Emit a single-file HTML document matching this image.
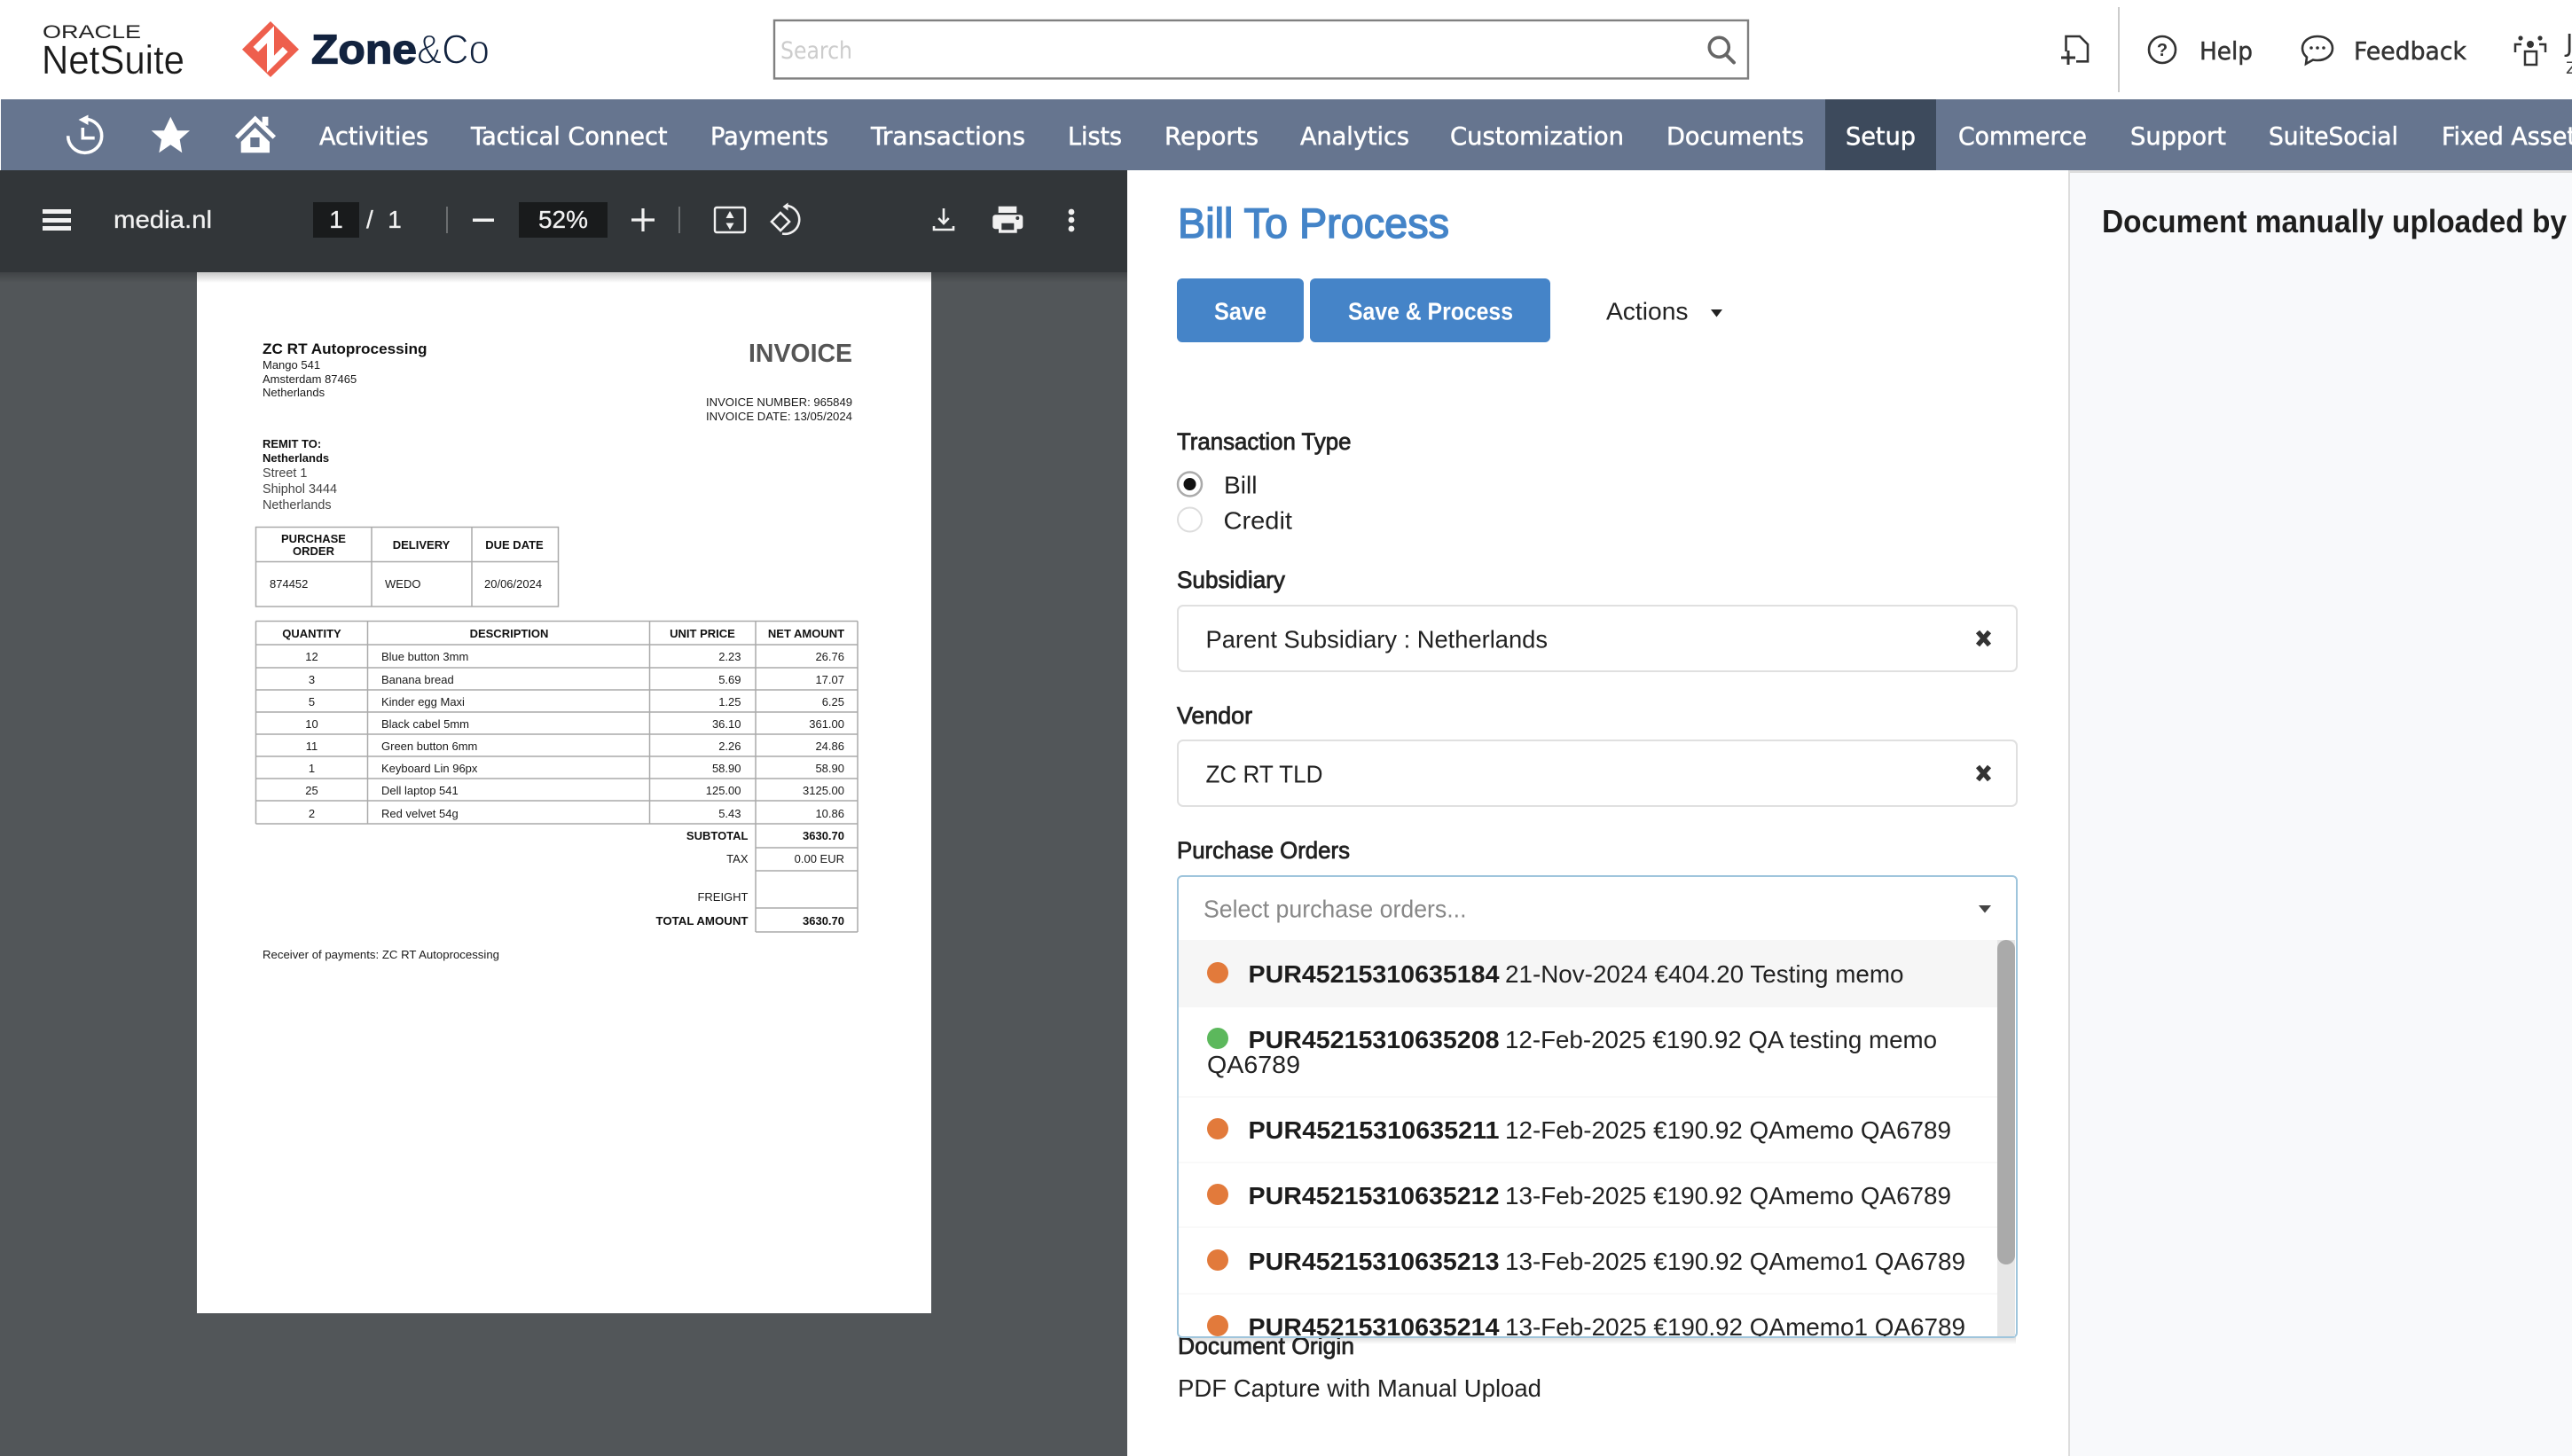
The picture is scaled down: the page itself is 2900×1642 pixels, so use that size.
<!DOCTYPE html>
<html lang="en"><head><meta charset="utf-8"><title>Bill To Process</title>
<style>
html,body{margin:0;padding:0;background:#fff;width:2900px;height:1642px;overflow:hidden}
svg{display:block}
text{font-family:"Liberation Sans",sans-serif;white-space:pre}
.n{font-family:"DejaVu Sans",sans-serif;font-size:28px;fill:#fff;stroke:#fff;stroke-width:.55px}
.h{font-family:"DejaVu Sans",sans-serif;font-size:28px;fill:#333;stroke:#333;stroke-width:.5px}
.p{font-family:"Liberation Sans",sans-serif;font-size:28px;fill:#f1f1f1;stroke:#f1f1f1;stroke-width:.3px}
.i{font-size:13px;fill:#1a1a1a}
.ib{font-size:13px;font-weight:bold;fill:#111}
.a{font-size:14.4px;fill:#444}
.r{text-anchor:end}
.m{text-anchor:middle}
.l{font-size:28px;fill:#222}
.s{font-size:27px;fill:#222;stroke:#222;stroke-width:.8px}
.b{font-size:28px;font-weight:bold;fill:#1c1c1c}
</style></head><body>
<svg width="2900" height="1642" viewBox="0 0 2900 1642" xmlns="http://www.w3.org/2000/svg">
<defs>
<linearGradient id="sh" x1="0" y1="0" x2="0" y2="1"><stop offset="0" stop-color="#000" stop-opacity=".22"/><stop offset="1" stop-color="#000" stop-opacity="0"/></linearGradient>
<linearGradient id="sh2" x1="0" y1="0" x2="0" y2="1"><stop offset="0" stop-color="#000" stop-opacity=".14"/><stop offset="1" stop-color="#000" stop-opacity="0"/></linearGradient>
<clipPath id="dd"><rect x="1329" y="1060" width="923" height="447"/></clipPath>
</defs>
<rect width="2900" height="1642" fill="#fff"/>

<!-- Top header -->
<text x="48" y="43" font-size="21" fill="#222" textLength="111" lengthAdjust="spacingAndGlyphs">ORACLE</text>
<text x="47" y="83" font-size="45" fill="#1a1a1a" stroke="#fff" stroke-width=".35" textLength="161" lengthAdjust="spacingAndGlyphs">NetSuite</text>
<polygon points="305,24 337,55.7 305,87 273,55.7" fill="#ee5f4d"/>
<polyline points="288.3,55.7 305,39 305,72.3 321.7,55.7" fill="none" stroke="#fff" stroke-width="8"/>
<text x="351" y="71.5" font-size="46" font-weight="bold" fill="#12233f" stroke="#12233f" stroke-width="1.3" textLength="119" lengthAdjust="spacingAndGlyphs">Zone</text>
<text x="470" y="71.5" font-size="46" fill="#12233f" stroke="#fff" stroke-width="1.3" textLength="82" lengthAdjust="spacingAndGlyphs">&amp;Co</text>
<rect x="873" y="23" width="1098" height="65.500" fill="#fff" stroke="#808080" stroke-width="2.400"/>
<text x="880" y="66" font-size="27" fill="#ccc" style="font-family:'DejaVu Sans',sans-serif" textLength="81" lengthAdjust="spacingAndGlyphs">Search</text>
<circle cx="1938.3" cy="53.3" r="11" fill="none" stroke="#666" stroke-width="3.6"/>
<line x1="1946" y1="61.5" x2="1955" y2="70.5" stroke="#666" stroke-width="4" stroke-linecap="round"/>

<!-- top right icons -->
<path d="M2329.5 58V41H2345L2354 50V69.3H2341" fill="none" stroke="#333" stroke-width="2.6"/>
<path d="M2332 57V73M2324 65H2340" fill="none" stroke="#333" stroke-width="3"/>
<rect x="2388" y="8" width="2" height="96" fill="#ccc"/>
<circle cx="2438" cy="56" r="15" fill="none" stroke="#333" stroke-width="2.6"/>
<text x="2438" y="63" font-size="20" font-weight="bold" fill="#333" class="m">?</text>
<text x="2480" y="67" class="h" textLength="60" lengthAdjust="spacingAndGlyphs">Help</text>
<path d="M2613 41c10 0 17 6 17 13.500s-7 13.500-17 13.500c-2 0-3 0-5 -.5l-8 4.500l1-7.500c-3-2.500-5-6-5-10c0-7.500 7-13.500 17-13.500z" fill="none" stroke="#333" stroke-width="2.6"/>
<circle cx="2606" cy="54" r="1.8" fill="#333"/><circle cx="2613" cy="54" r="1.8" fill="#333"/><circle cx="2620" cy="54" r="1.8" fill="#333"/>
<text x="2654" y="67" class="h" textLength="127" lengthAdjust="spacingAndGlyphs">Feedback</text>
<circle cx="2853" cy="50" r="4" fill="#333"/><circle cx="2842" cy="43" r="2.6" fill="#333"/><circle cx="2864" cy="43" r="2.6" fill="#333"/>
<rect x="2847" y="58" width="13" height="15" fill="none" stroke="#333" stroke-width="2.5"/>
<path d="M2836 59V50H2843M2870 59V50H2863" fill="none" stroke="#333" stroke-width="2.5"/>
<text x="2893" y="58" font-size="28" fill="#333" style="font-family:'DejaVu Sans',sans-serif">J</text>
<text x="2893" y="83" font-size="19" fill="#444" style="font-family:'DejaVu Sans',sans-serif">Z</text>

<!-- Nav -->
<rect x="1" y="112" width="2899" height="80" fill="#66758f"/>
<rect x="2058" y="112" width="125" height="80" fill="#3d4a5c"/>
<path d="M76.700 153.300A19 19 0 1 0 96 134.300" fill="none" stroke="#fff" stroke-width="3.600"/>
<polygon points="88.500,135 99.500,129.500 99.500,141" fill="#fff"/>
<path d="M93.300 144V155.700H106.700" fill="none" stroke="#fff" stroke-width="3.600"/>
<polygon fill="#fff" points="192.300,131.700 200,147.300 214,147.300 202.700,157.300 205.300,172.300 192.300,163.300 179.300,172.300 182,157.300 170.700,147.300 185,147.300"/>
<polyline points="266.700,155 287.700,134 309.300,155" fill="none" stroke="#fff" stroke-width="5"/>
<rect x="295.700" y="131.700" width="6.700" height="10" fill="#fff"/>
<polygon points="271.700,160 287.700,144 304,160 304,172.300 271.700,172.300" fill="#fff"/>
<rect x="282.300" y="155" width="10.300" height="11" fill="#66758f"/>
<g class="navt">
<text class="n" x="360" y="163" textLength="123" lengthAdjust="spacingAndGlyphs">Activities</text>
<text class="n" x="531" y="163" textLength="221.500" lengthAdjust="spacingAndGlyphs">Tactical Connect</text>
<text class="n" x="801" y="163" textLength="133" lengthAdjust="spacingAndGlyphs">Payments</text>
<text class="n" x="982" y="163" textLength="174" lengthAdjust="spacingAndGlyphs">Transactions</text>
<text class="n" x="1204" y="163" textLength="61" lengthAdjust="spacingAndGlyphs">Lists</text>
<text class="n" x="1313" y="163" textLength="106" lengthAdjust="spacingAndGlyphs">Reports</text>
<text class="n" x="1466" y="163" textLength="123" lengthAdjust="spacingAndGlyphs">Analytics</text>
<text class="n" x="1635" y="163" textLength="196" lengthAdjust="spacingAndGlyphs">Customization</text>
<text class="n" x="1879" y="163" textLength="155" lengthAdjust="spacingAndGlyphs">Documents</text>
<text class="n" x="2081" y="163" textLength="79" lengthAdjust="spacingAndGlyphs">Setup</text>
<text class="n" x="2208" y="163" textLength="145" lengthAdjust="spacingAndGlyphs">Commerce</text>
<text class="n" x="2402" y="163" textLength="108" lengthAdjust="spacingAndGlyphs">Support</text>
<text class="n" x="2558" y="163" textLength="146" lengthAdjust="spacingAndGlyphs">SuiteSocial</text>
<text class="n" x="2753" y="163" textLength="166" lengthAdjust="spacingAndGlyphs">Fixed Assets</text>
</g>

<!-- PDF viewer -->
<rect x="0" y="192" width="1271" height="1450" fill="#525659"/>
<rect x="222" y="307" width="828" height="1174" fill="#fff"/>
<rect x="0" y="307" width="1271" height="12" fill="url(#sh)"/>
<rect x="0" y="192" width="1271" height="115" fill="#323639"/>
<rect x="48" y="236" width="32" height="5" fill="#f1f1f1"/><rect x="48" y="246" width="32" height="5" fill="#f1f1f1"/><rect x="48" y="255" width="32" height="5" fill="#f1f1f1"/>
<text x="128" y="257" class="p" textLength="111" lengthAdjust="spacingAndGlyphs">media.nl</text>
<rect x="353" y="228" width="52" height="40" fill="#191b1c"/>
<text x="379" y="257" class="p m">1</text>
<text x="413" y="257" class="p">/</text>
<text x="445" y="257" class="p m">1</text>
<rect x="503" y="233" width="2" height="30" fill="#6b6e70"/>
<rect x="533" y="246.500" width="24" height="3.500" fill="#f1f1f1"/>
<rect x="585" y="228" width="100" height="40" fill="#191b1c"/>
<text x="607" y="257" class="p" textLength="56" lengthAdjust="spacingAndGlyphs">52%</text>
<path d="M712 248H738M725 235V261" fill="none" stroke="#f1f1f1" stroke-width="3.200"/>
<rect x="765" y="233" width="2" height="30" fill="#6b6e70"/>
<rect x="806" y="234" width="34" height="28" rx="2" fill="none" stroke="#f1f1f1" stroke-width="2.400"/>
<polygon points="823,238 818.500,246 827.500,246" fill="#f1f1f1"/><polygon points="823,259 818.500,251.500 827.500,251.500" fill="#f1f1f1"/>
<polygon points="880,240 890,250 880,260 870,250" fill="none" stroke="#f1f1f1" stroke-width="2.600"/>
<path d="M888.300 232A16 16 0 0 1 882 263.500" fill="none" stroke="#f1f1f1" stroke-width="2.600"/>
<polygon points="888.500,228.500 888.500,237.500 882.500,233" fill="#f1f1f1"/>
<path d="M1064 235V251M1058.300 246L1064 252L1069.700 246" fill="none" stroke="#f1f1f1" stroke-width="2.600"/>
<path d="M1053 255V259H1075V255" fill="none" stroke="#f1f1f1" stroke-width="2.600"/>
<rect x="1125.700" y="232.700" width="20.600" height="7.300" fill="#f1f1f1"/>
<rect x="1119.300" y="242.300" width="34" height="16" rx="3" fill="#f1f1f1"/>
<rect x="1126" y="250" width="20.700" height="12.700" fill="#f1f1f1"/>
<rect x="1129.300" y="251.700" width="14" height="7.600" fill="#323639"/>
<circle cx="1147.300" cy="246" r="2" fill="#323639"/>
<circle cx="1208" cy="239" r="3.400" fill="#f1f1f1"/><circle cx="1208" cy="248" r="3.400" fill="#f1f1f1"/><circle cx="1208" cy="258" r="3.400" fill="#f1f1f1"/>

<!-- Invoice -->
<text x="296" y="399" font-size="16.500" font-weight="bold" fill="#111" textLength="185.500" lengthAdjust="spacingAndGlyphs">ZC RT Autoprocessing</text>
<text x="296" y="416" class="i">Mango 541</text>
<text x="296" y="432" class="i">Amsterdam 87465</text>
<text x="296" y="447" class="i">Netherlands</text>
<text x="844" y="408" font-size="28.500" font-weight="bold" fill="#555" textLength="117" lengthAdjust="spacingAndGlyphs">INVOICE</text>
<text x="796" y="458" class="i" textLength="165" lengthAdjust="spacingAndGlyphs">INVOICE NUMBER: 965849</text>
<text x="796" y="474" class="i" textLength="165" lengthAdjust="spacingAndGlyphs">INVOICE DATE: 13/05/2024</text>
<text x="296" y="505" class="ib">REMIT TO:</text>
<text x="296" y="521" class="ib">Netherlands</text>
<text x="296" y="538" class="a">Street 1</text>
<text x="296" y="556" class="a">Shiphol 3444</text>
<text x="296" y="574" class="a">Netherlands</text>

<g fill="none" stroke="#aaa" stroke-width="1.500">
<rect x="288.500" y="594.500" width="341" height="89.500"/>
<path d="M419 594.500V684M532 594.500V684M288.500 633.500H629.500"/>
<path d="M288.500 700.500H967M288.500 727H967M288.500 753H967M288.500 778H967M288.500 803H967M288.500 828H967M288.500 853H967M288.500 878H967M288.500 903H967M288.500 929H967"/>
<path d="M288.500 700.500V929M414.500 700.500V929M732.500 700.500V929M852 700.500V1051M967 700.500V1051"/>
<path d="M852 956H967M852 982H967M852 1024H967M852 1051H967"/>
</g>
<text x="353.500" y="612" class="ib m">PURCHASE</text>
<text x="353.500" y="626" class="ib m">ORDER</text>
<text x="475" y="619" class="ib m">DELIVERY</text>
<text x="580" y="619" class="ib m">DUE DATE</text>
<text x="304" y="663" class="i">874452</text>
<text x="434" y="663" class="i">WEDO</text>
<text x="546" y="663" class="i">20/06/2024</text>
<text x="351.500" y="719" class="ib m">QUANTITY</text>
<text x="574" y="719" class="ib m">DESCRIPTION</text>
<text x="792" y="719" class="ib m">UNIT PRICE</text>
<text x="909" y="719" class="ib m">NET AMOUNT</text>

<text x="351.500" y="745" class="i m">12</text><text x="430" y="745" class="i">Blue button 3mm</text><text x="835.500" y="745" class="i r">2.23</text><text x="952" y="745" class="i r">26.76</text>
<text x="351.500" y="771" class="i m">3</text><text x="430" y="771" class="i">Banana bread</text><text x="835.500" y="771" class="i r">5.69</text><text x="952" y="771" class="i r">17.07</text>
<text x="351.500" y="796" class="i m">5</text><text x="430" y="796" class="i">Kinder egg Maxi</text><text x="835.500" y="796" class="i r">1.25</text><text x="952" y="796" class="i r">6.25</text>
<text x="351.500" y="821" class="i m">10</text><text x="430" y="821" class="i">Black cabel 5mm</text><text x="835.500" y="821" class="i r">36.10</text><text x="952" y="821" class="i r">361.00</text>
<text x="351.500" y="846" class="i m">11</text><text x="430" y="846" class="i">Green button 6mm</text><text x="835.500" y="846" class="i r">2.26</text><text x="952" y="846" class="i r">24.86</text>
<text x="351.500" y="871" class="i m">1</text><text x="430" y="871" class="i">Keyboard Lin 96px</text><text x="835.500" y="871" class="i r">58.90</text><text x="952" y="871" class="i r">58.90</text>
<text x="351.500" y="896" class="i m">25</text><text x="430" y="896" class="i">Dell laptop 541</text><text x="835.500" y="896" class="i r">125.00</text><text x="952" y="896" class="i r">3125.00</text>
<text x="351.500" y="922" class="i m">2</text><text x="430" y="922" class="i">Red velvet 54g</text><text x="835.500" y="922" class="i r">5.43</text><text x="952" y="922" class="i r">10.86</text>

<text x="843.500" y="947" class="ib r">SUBTOTAL</text><text x="952" y="947" class="ib r">3630.70</text>
<text x="843.500" y="973" class="i r">TAX</text><text x="952" y="973" class="i r">0.00 EUR</text>
<text x="843.500" y="1016" class="i r">FREIGHT</text>
<text x="739.500" y="1043" class="ib" textLength="104" lengthAdjust="spacingAndGlyphs">TOTAL AMOUNT</text><text x="952" y="1043" class="ib r">3630.70</text>
<text x="296" y="1081" class="i" textLength="267" lengthAdjust="spacingAndGlyphs">Receiver of payments: ZC RT Autoprocessing</text>

<!-- Right side panel -->
<rect x="2332" y="192" width="568" height="1450" fill="#f8f9fb"/>
<rect x="2332" y="192" width="2" height="1450" fill="#ddd"/>
<rect x="2332" y="192" width="568" height="3" fill="#ddd"/>
<text x="2370" y="262" font-size="36.500" font-weight="bold" fill="#1e1e1e" textLength="524" lengthAdjust="spacingAndGlyphs">Document manually uploaded by</text>

<!-- Form -->
<text x="1328" y="268" font-size="47" fill="#4484c8" stroke="#4484c8" stroke-width="1.500" textLength="306" lengthAdjust="spacingAndGlyphs">Bill To Process</text>
<rect x="1327" y="314" width="143" height="72" rx="6" fill="#4584c8"/>
<rect x="1477" y="314" width="271" height="72" rx="6" fill="#4584c8"/>
<text x="1369" y="360.500" font-size="27.500" font-weight="bold" fill="#fff" textLength="59" lengthAdjust="spacingAndGlyphs">Save</text>
<text x="1520" y="360.500" font-size="27.500" font-weight="bold" fill="#fff" textLength="186" lengthAdjust="spacingAndGlyphs">Save &amp; Process</text>
<text x="1811" y="360.500" class="l" textLength="92.500" lengthAdjust="spacingAndGlyphs">Actions</text>
<polygon points="1929,349 1942,349 1935.500,357.500" fill="#222"/>

<text x="1327" y="507" class="s" textLength="196.500" lengthAdjust="spacingAndGlyphs">Transaction Type</text>
<circle cx="1341.500" cy="546" r="13.500" fill="#fff" stroke="#aaa" stroke-width="2.500"/>
<circle cx="1341.500" cy="546" r="7" fill="#111"/>
<text x="1380" y="556.500" class="l" textLength="37.500" lengthAdjust="spacingAndGlyphs">Bill</text>
<circle cx="1341.500" cy="586" r="13.500" fill="#fff" stroke="#ddd" stroke-width="2"/>
<text x="1379.500" y="596.500" class="l" textLength="77.500" lengthAdjust="spacingAndGlyphs">Credit</text>

<text x="1327" y="663" class="s" textLength="122" lengthAdjust="spacingAndGlyphs">Subsidiary</text>
<rect x="1328" y="683" width="946" height="74" rx="6" fill="#fff" stroke="#e0e0e0" stroke-width="2"/>
<text x="1359.500" y="730.500" class="l" textLength="385.500" lengthAdjust="spacingAndGlyphs">Parent Subsidiary : Netherlands</text>
<path d="M2230 712.500L2243 727.500M2243 712.500L2230 727.500" stroke="#333" stroke-width="5.500" fill="none"/>

<text x="1327" y="816" class="s" textLength="85" lengthAdjust="spacingAndGlyphs">Vendor</text>
<rect x="1328" y="835" width="946" height="74" rx="6" fill="#fff" stroke="#e0e0e0" stroke-width="2"/>
<text x="1359.500" y="882.500" class="l" textLength="132" lengthAdjust="spacingAndGlyphs">ZC RT TLD</text>
<path d="M2230 864.500L2243 879.500M2243 864.500L2230 879.500" stroke="#333" stroke-width="5.500" fill="none"/>

<text x="1327" y="968" class="s" textLength="195" lengthAdjust="spacingAndGlyphs">Purchase Orders</text>

<text x="1328" y="1527" class="s" textLength="199" lengthAdjust="spacingAndGlyphs">Document Origin</text>
<text x="1328" y="1575" class="l" textLength="410" lengthAdjust="spacingAndGlyphs">PDF Capture with Manual Upload</text>

<!-- Dropdown -->
<rect x="1329" y="1508" width="944" height="8" fill="url(#sh2)"/>
<rect x="1328" y="988" width="946" height="520" rx="5" fill="#fff" stroke="#9fc5dc" stroke-width="2"/>
<text x="1357" y="1034.500" font-size="28" fill="#888" textLength="296.500" lengthAdjust="spacingAndGlyphs">Select purchase orders...</text>
<polygon points="2231,1021 2245,1021 2238,1029.500" fill="#444"/>
<rect x="1329" y="1060" width="923" height="76" fill="#f6f6f6"/>
<rect x="2252" y="1060" width="20" height="447" fill="#e6e6e6"/>
<rect x="2252" y="1060" width="20" height="366" rx="10" fill="#aaa"/>
<g clip-path="url(#dd)">
<rect x="1329" y="1236" width="923" height="2" fill="#f9f9f9"/>
<rect x="1329" y="1310" width="923" height="2" fill="#f9f9f9"/>
<rect x="1329" y="1383" width="923" height="2" fill="#f9f9f9"/>
<rect x="1329" y="1458" width="923" height="2" fill="#f9f9f9"/>

<ellipse cx="1373" cy="1097" rx="12" ry="12" fill="#e27a3b"/>
<text x="1407.500" y="1108" class="b" textLength="283" lengthAdjust="spacingAndGlyphs">PUR45215310635184</text>
<text x="1697" y="1108" class="l" textLength="449.500" lengthAdjust="spacingAndGlyphs">21-Nov-2024 €404.20 Testing memo</text>

<ellipse cx="1373" cy="1171" rx="12" ry="12" fill="#5cb85c"/>
<text x="1407.500" y="1182" class="b" textLength="283" lengthAdjust="spacingAndGlyphs">PUR45215310635208</text>
<text x="1697" y="1182" class="l" textLength="487" lengthAdjust="spacingAndGlyphs">12-Feb-2025 €190.92 QA testing memo</text>
<text x="1361" y="1210" class="l" textLength="105" lengthAdjust="spacingAndGlyphs">QA6789</text>

<ellipse cx="1373" cy="1273" rx="12" ry="12" fill="#e27a3b"/>
<text x="1407.500" y="1284" class="b" textLength="283" lengthAdjust="spacingAndGlyphs">PUR45215310635211</text>
<text x="1697" y="1284" class="l" textLength="503" lengthAdjust="spacingAndGlyphs">12-Feb-2025 €190.92 QAmemo QA6789</text>

<ellipse cx="1373" cy="1347" rx="12" ry="12" fill="#e27a3b"/>
<text x="1407.500" y="1358" class="b" textLength="283" lengthAdjust="spacingAndGlyphs">PUR45215310635212</text>
<text x="1697" y="1358" class="l" textLength="503" lengthAdjust="spacingAndGlyphs">13-Feb-2025 €190.92 QAmemo QA6789</text>

<ellipse cx="1373" cy="1421" rx="12" ry="12" fill="#e27a3b"/>
<text x="1407.500" y="1432" class="b" textLength="283" lengthAdjust="spacingAndGlyphs">PUR45215310635213</text>
<text x="1697" y="1432" class="l" textLength="519" lengthAdjust="spacingAndGlyphs">13-Feb-2025 €190.92 QAmemo1 QA6789</text>

<ellipse cx="1373" cy="1495" rx="12" ry="12" fill="#e27a3b"/>
<text x="1407.500" y="1506" class="b" textLength="283" lengthAdjust="spacingAndGlyphs">PUR45215310635214</text>
<text x="1697" y="1506" class="l" textLength="519" lengthAdjust="spacingAndGlyphs">13-Feb-2025 €190.92 QAmemo1 QA6789</text>
</g>
</svg>
</body></html>
